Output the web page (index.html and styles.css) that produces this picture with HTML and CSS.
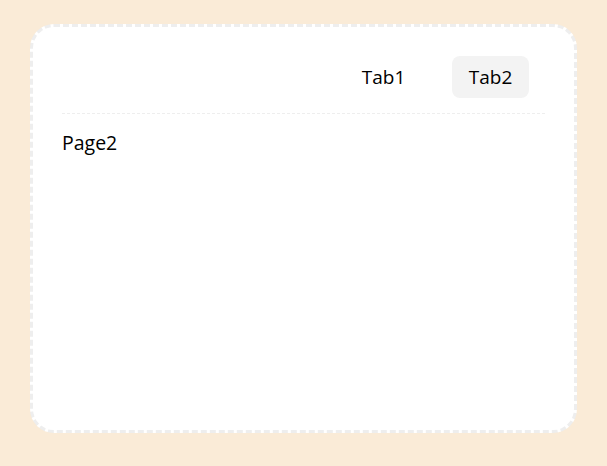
FILE: index.html
```html
<!DOCTYPE html>
<html>
<head>
<meta charset="utf-8">
<link rel="stylesheet" href="styles.css">
</head>
<body>
  <div class="card">
    <div class="tabs">
      <div class="tab">Tab1</div>
      <div class="tab active">Tab2</div>
    </div>
    <div class="page">Page2</div>
  </div>
</body>
</html>
```

FILE: styles.css
```css
html, body {
  margin: 0;
  background: antiquewhite;
}
body {
  padding: 24px 30px;
  font-family: "Open Sans", "Noto Sans", sans-serif;
  color: #000;
}
.card {
  box-sizing: border-box;
  height: 409px;
  background: #fff;
  border: 3px dashed #eeeeee;
  border-radius: 24px;
  padding: 29px;
}
.tabs {
  display: flex;
  justify-content: flex-end;
  gap: 30px;
  padding: 0 16px 15px 0;
  border-bottom: 1px dashed #eeeeee;
}
.tab {
  box-sizing: border-box;
  height: 42px;
  width: 77px;
  display: flex;
  align-items: center;
  justify-content: center;
  font-size: 19px;
  border-radius: 8px;
}
.tab.active {
  background: #f3f3f3;
}
.page {
  margin-top: 15px;
  font-size: 19.5px;
  line-height: 28px;
}
```
